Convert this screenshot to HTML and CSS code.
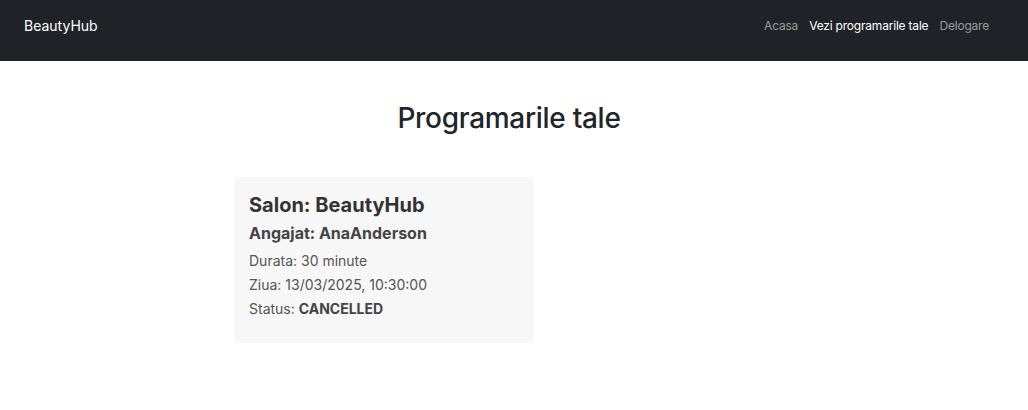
FILE: index.html
```html
<!DOCTYPE html>
<html lang="ro">
<head>
<meta charset="utf-8">
<title>BeautyHub</title>
<link rel="stylesheet" href="styles.css">
</head>
<body>
<nav class="navbar">
  <a class="brand" href="#">BeautyHub</a>
  <ul class="nav-links">
    <li><a href="#">Acasa</a></li>
    <li><a href="#" class="active">Vezi programarile tale</a></li>
    <li><a href="#">Delogare</a></li>
  </ul>
</nav>
<main class="page">
  <h1 class="title">Programarile tale</h1>
  <div class="cards">
    <div class="card">
      <h2 class="card-title">Salon: BeautyHub</h2>
      <h3 class="card-sub">Angajat: AnaAnderson</h3>
      <p class="card-line">Durata: 30 minute</p>
      <p class="card-line">Ziua: 13/03/2025, 10:30:00</p>
      <p class="card-line">Status: <strong>CANCELLED</strong></p>
    </div>
  </div>
</main>
</body>
</html>
```
FILE: styles.css
```css
* { box-sizing: border-box; }
body {
  margin: 0;
  font-family: Inter, "Noto Sans", sans-serif;
  background: #fff;
  color: #212529;
}
.navbar {
  height: 61px;
  background: #1f2327;
  display: flex;
  align-items: center;
  justify-content: space-between;
  padding: 0 24px 0 24px;
}
.brand {
  color: #fff;
  text-decoration: none;
  font-size: 14px;
  padding-bottom: 10px;
}
.nav-links {
  list-style: none;
  display: flex;
  gap: 11px;
  margin: 0;
  padding: 0 15px 14px 0;
}
.nav-links a {
  color: rgba(255,255,255,0.55);
  text-decoration: none;
  font-size: 12px;
  letter-spacing: -0.2px;
}
.nav-links a.active { color: #fff; }
.page {
  padding-top: 40px;
}
.title {
  text-align: center;
  font-size: 28px;
  letter-spacing: -0.3px;
  font-weight: 500;
  margin: 0 0 42px 0;
  padding-right: 10px;
}
.cards {
  display: flex;
  padding-left: 234px;
}
.card {
  width: 300px;
  height: 166px;
  background: #f7f7f7;
  border-radius: 8px;
  padding: 16px 15px 14px;
  color: #444;
}
.card-title {
  margin: 0 0 6px 0;
  font-size: 20px;
  font-weight: 700;
  color: #333;
}
.card-sub {
  margin: 0 0 6px 0;
  font-size: 16px;
  font-weight: 700;
  color: #444;
}
.card-line {
  margin: 0;
  font-size: 14px;
  line-height: 24px;
  color: #555;
}
.card-line strong { color: #444; }
```
